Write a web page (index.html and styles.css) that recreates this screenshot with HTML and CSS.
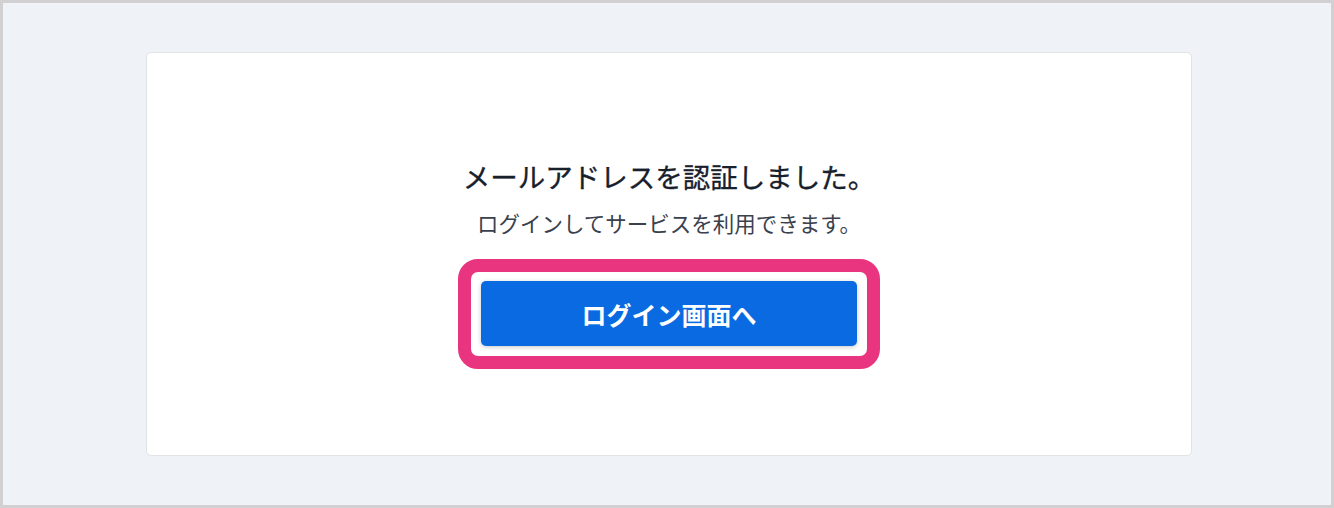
FILE: index.html
```html
<!DOCTYPE html>
<html lang="ja">
<head>
<meta charset="utf-8">
<title>メールアドレスを認証しました。</title>
<link rel="stylesheet" href="styles.css">
</head>
<body>
<div class="frame">
  <div class="card">
    <h1 class="title">メールアドレスを認証しました。</h1>
    <p class="subtitle">ログインしてサービスを利用できます。</p>
    <div class="highlight">
      <a class="button" href="#">ログイン画面へ</a>
    </div>
  </div>
</div>
</body>
</html>
```

FILE: styles.css
```css
html, body {
  margin: 0;
  padding: 0;
  background: #ffffff;
}

body {
  font-family: "Noto Sans CJK JP", "Noto Sans", sans-serif;
}

.frame {
  box-sizing: border-box;
  width: 1334px;
  height: 508px;
  border: 3px solid #d2d0d1;
  background: #eff2f7;
  padding: 49px 0 0 143px;
}

.card {
  box-sizing: border-box;
  width: 1046px;
  height: 404px;
  background: #ffffff;
  border: 1px solid #e1e3e7;
  border-radius: 5px;
  padding-top: 105px;
  display: flex;
  flex-direction: column;
  align-items: center;
}

.title {
  margin: 0;
  font-size: 27.5px;
  line-height: 36px;
  font-weight: 400;
  color: #18202c;
  -webkit-text-stroke: 0.3px #18202c;
}

.subtitle {
  margin: 15px 0 0;
  font-size: 21.5px;
  line-height: 28px;
  font-weight: 400;
  color: #3a414d;
}

.highlight {
  margin-top: 22px;
  border: 13px solid #e9357f;
  border-radius: 20px;
  padding: 9px 10px 10px;
  background: #ffffff;
}

.button {
  display: flex;
  align-items: center;
  justify-content: center;
  width: 376px;
  height: 65px;
  background: #0a6ae1;
  border-radius: 5px;
  box-shadow: 0 1px 4px rgba(0, 0, 0, 0.22);
  color: #ffffff;
  font-size: 25px;
  font-weight: 700;
  text-decoration: none;
}
```
